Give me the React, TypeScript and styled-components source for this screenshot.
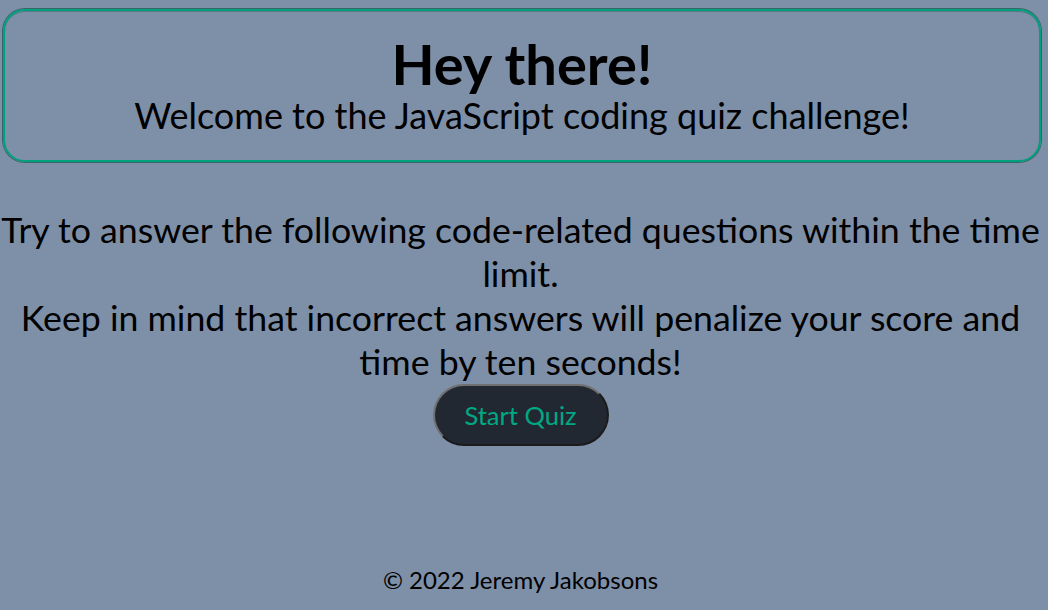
import React from "react";
import styled, { createGlobalStyle } from "styled-components";

const Global = createGlobalStyle`
  html, body { margin: 0; padding: 0; }
  body {
    background: #7e8fa8;
    font-family: Lato, "Open Sans", sans-serif;
    color: #000;
    height: 610px;
    overflow: hidden;
  }
`;

const Page = styled.div`
  display: flex;
  flex-direction: column;
  align-items: stretch;
  height: 610px;
  padding-right: 7px;
`;

const Header = styled.header`
  margin: 9px 0 0 3px;
  height: 153px;
  box-sizing: border-box;
  border: 2px solid #00a07f;
  box-shadow: 0 0 0 1px rgba(0, 70, 52, 0.55), inset 0 1px 0 rgba(0, 70, 52, 0.3);
  border-radius: 22px;
  display: flex;
  flex-direction: column;
  align-items: center;
  justify-content: center;
  text-align: center;
`;

const Title = styled.h1`
  margin: 0;
  font-size: 56px;
  font-weight: 700;
  line-height: 60px;
`;

const Subtitle = styled.h2`
  margin: 0;
  font-size: 36px;
  font-weight: 400;
  line-height: 1.2;
`;

const Main = styled.main`
  display: flex;
  flex-direction: column;
  align-items: center;
  text-align: center;
  margin-top: 46px;
`;

const Intro = styled.p`
  margin: 0;
  font-size: 35.7px;
  line-height: 44px;
`;

const StartButton = styled.button`
  margin-top: 0;
  width: 176px;
  height: 62px;
  border-radius: 31px;
  background: #222831;
  border: 2px outset #707070;
  color: #00a884;
  font-family: Lato, sans-serif;
  font-size: 25.5px;
  cursor: pointer;
`;

const Footer = styled.footer`
  margin-top: auto;
  margin-bottom: 16px;
  text-align: center;
  font-size: 24px;
`;

export default function App() {
  return (
    <Page>
      <Global />
      <Header>
        <Title>Hey there!</Title>
        <Subtitle>Welcome to the JavaScript coding quiz challenge!</Subtitle>
      </Header>
      <Main>
        <Intro>
          Try to answer the following code-related questions within the time limit.
          <br />
          Keep in mind that incorrect answers will penalize your score and time by ten seconds!
        </Intro>
        <StartButton>Start Quiz</StartButton>
      </Main>
      <Footer>© 2022 Jeremy Jakobsons</Footer>
    </Page>
  );
}
